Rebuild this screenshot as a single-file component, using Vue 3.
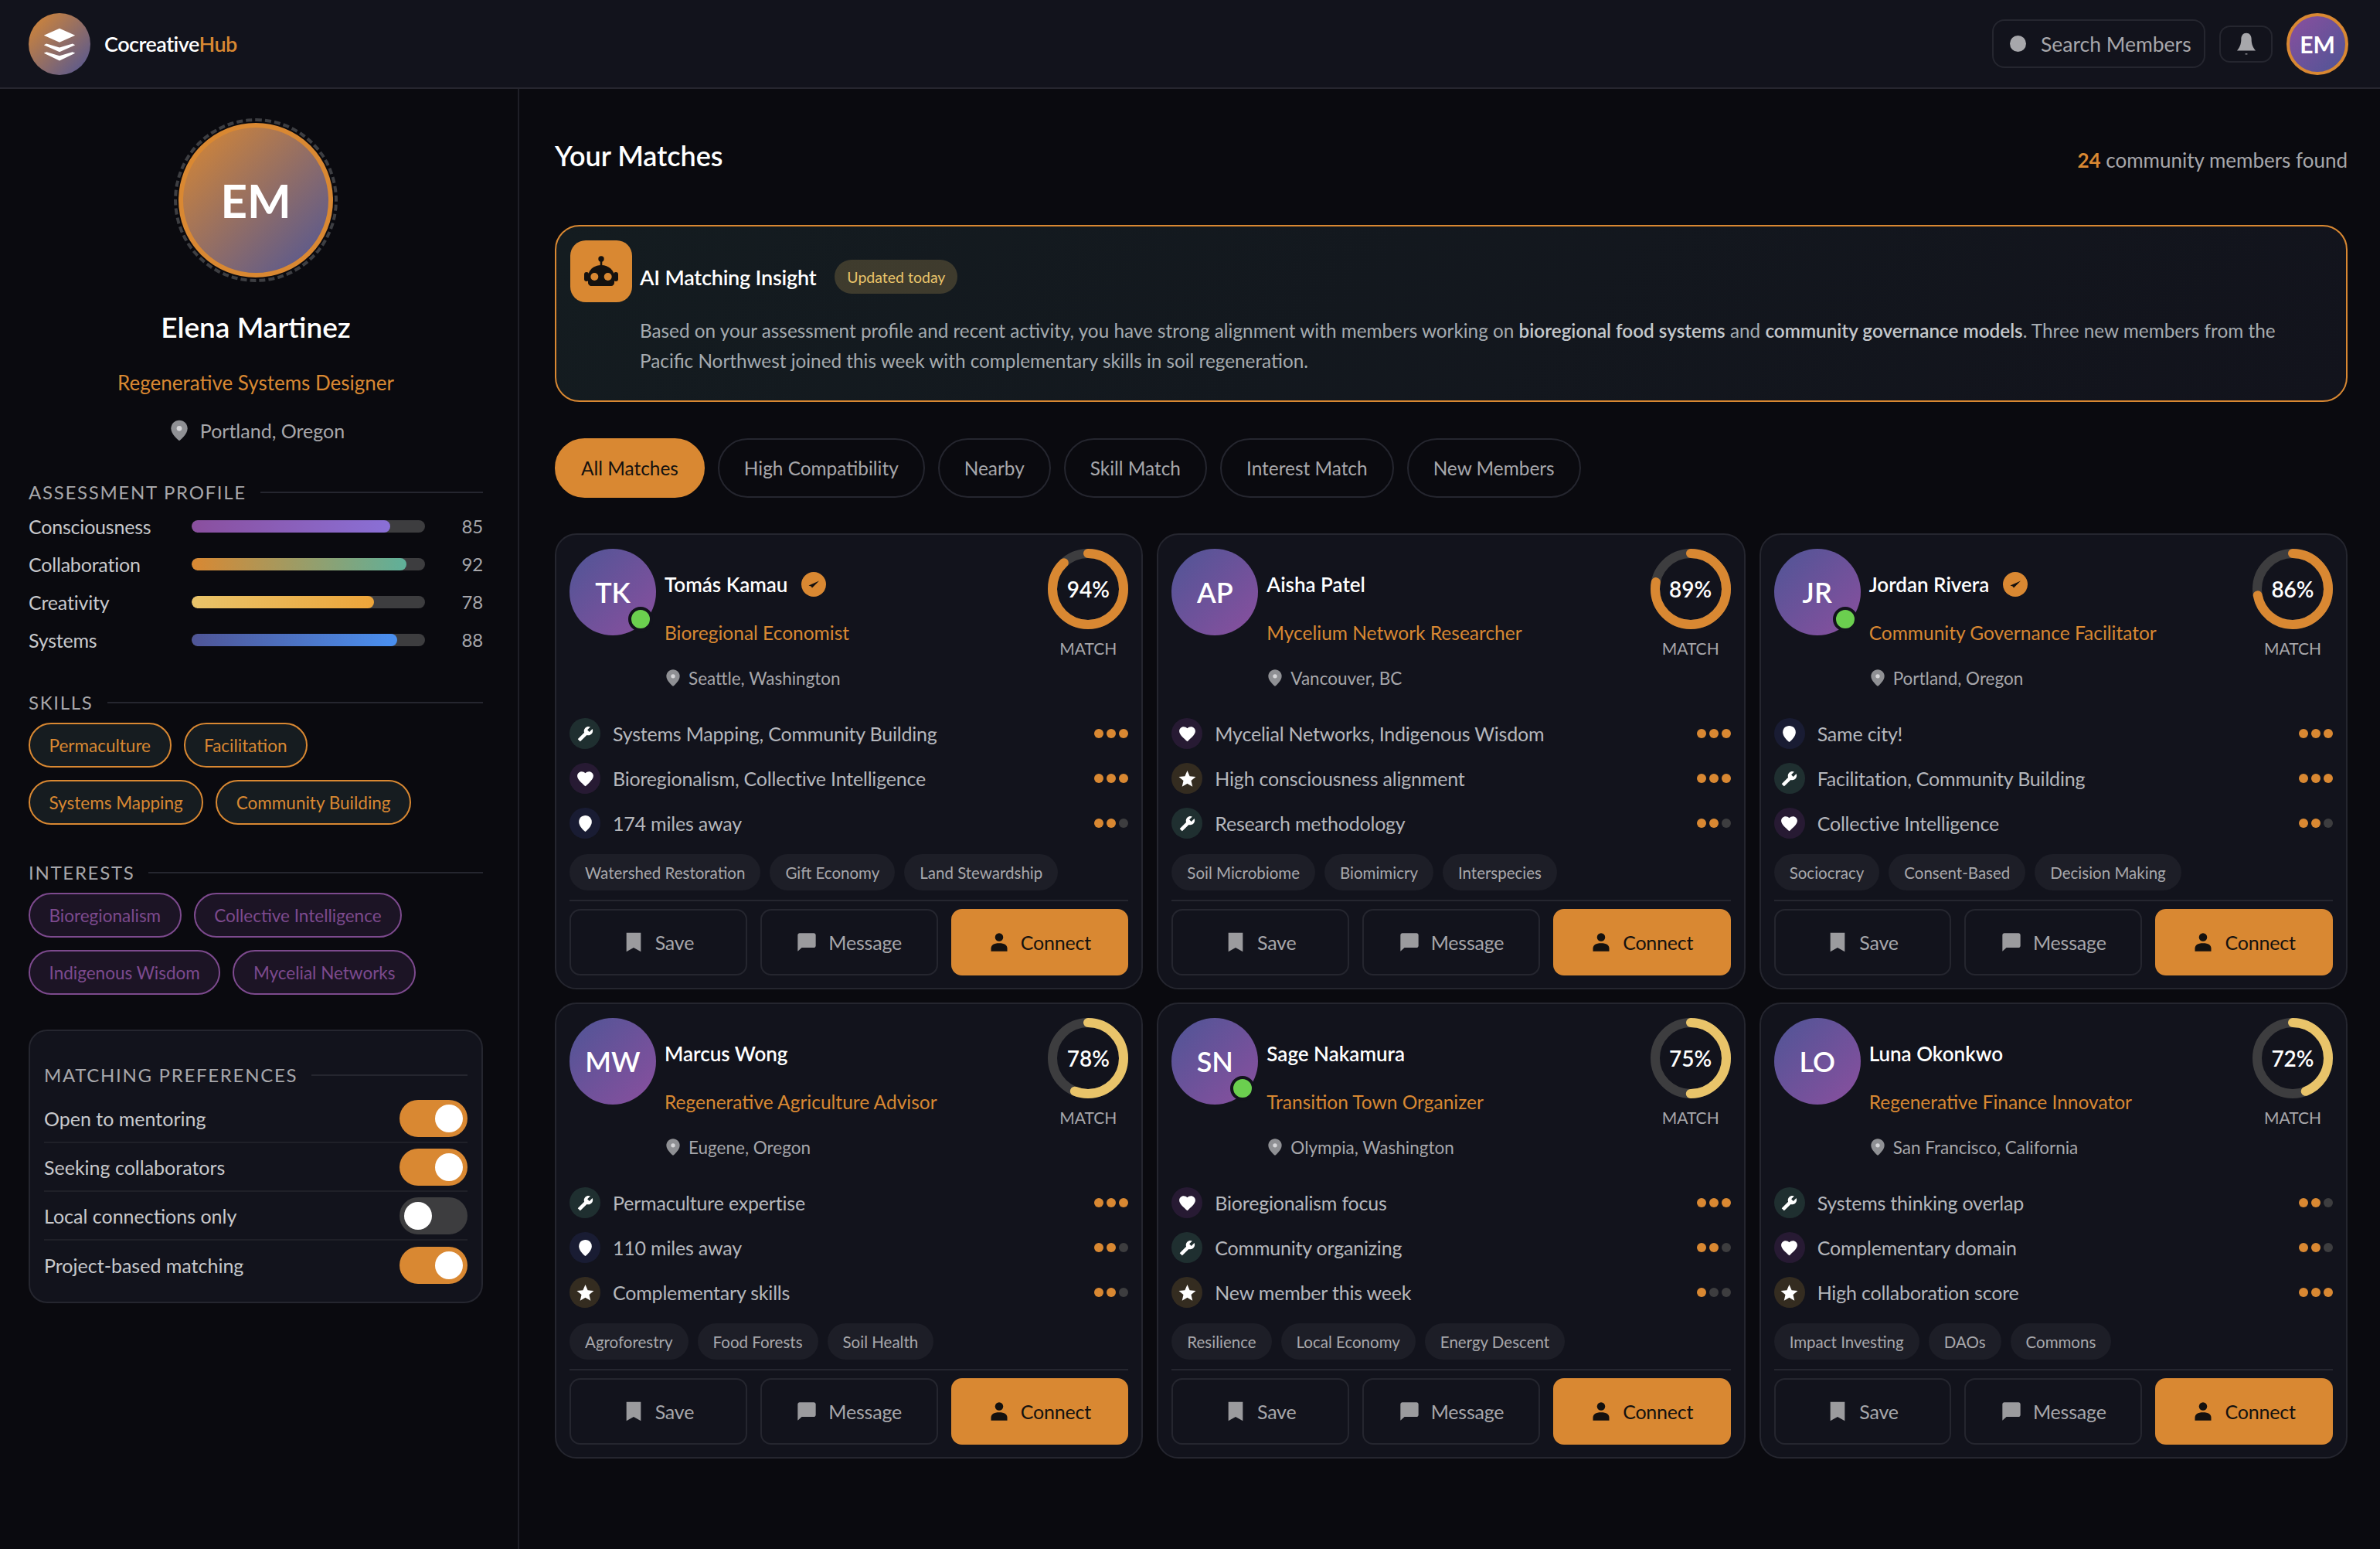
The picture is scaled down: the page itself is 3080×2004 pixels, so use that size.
<script setup>
import { ref } from 'vue';

const skills = ['Permaculture', 'Facilitation', 'Systems Mapping', 'Community Building'];
const interests = ['Bioregionalism', 'Collective Intelligence', 'Indigenous Wisdom', 'Mycelial Networks'];
const filters = ['All Matches', 'High Compatibility', 'Nearby', 'Skill Match', 'Interest Match', 'New Members'];
const activeFilter = ref('All Matches');

const assessment = [
  { label: 'Consciousness', value: 85, cls: 'fill-purple' },
  { label: 'Collaboration', value: 92, cls: 'fill-green' },
  { label: 'Creativity', value: 78, cls: 'fill-yellow' },
  { label: 'Systems', value: 88, cls: 'fill-blue' },
];

const prefs = ref([
  { label: 'Open to mentoring', on: true },
  { label: 'Seeking collaborators', on: true },
  { label: 'Local connections only', on: false },
  { label: 'Project-based matching', on: true },
]);

const members = [
  {
    initials: 'TK', name: 'Tomás Kamau', verified: true, online: true, role: 'Bioregional Economist', place: 'Seattle, Washington', score: 94,
    rows: [['wrench', 'Systems Mapping, Community Building', 3], ['heart', 'Bioregionalism, Collective Intelligence', 3], ['pin', '174 miles away', 2]],
    tags: ['Watershed Restoration', 'Gift Economy', 'Land Stewardship'],
  },
  {
    initials: 'AP', name: 'Aisha Patel', verified: false, online: false, role: 'Mycelium Network Researcher', place: 'Vancouver, BC', score: 89,
    rows: [['heart', 'Mycelial Networks, Indigenous Wisdom', 3], ['star', 'High consciousness alignment', 3], ['wrench', 'Research methodology', 2]],
    tags: ['Soil Microbiome', 'Biomimicry', 'Interspecies'],
  },
  {
    initials: 'JR', name: 'Jordan Rivera', verified: true, online: true, role: 'Community Governance Facilitator', place: 'Portland, Oregon', score: 86,
    rows: [['pin', 'Same city!', 3], ['wrench', 'Facilitation, Community Building', 3], ['heart', 'Collective Intelligence', 2]],
    tags: ['Sociocracy', 'Consent-Based', 'Decision Making'],
  },
  {
    initials: 'MW', name: 'Marcus Wong', verified: false, online: false, role: 'Regenerative Agriculture Advisor', place: 'Eugene, Oregon', score: 78,
    rows: [['wrench', 'Permaculture expertise', 3], ['pin', '110 miles away', 2], ['star', 'Complementary skills', 2]],
    tags: ['Agroforestry', 'Food Forests', 'Soil Health'],
  },
  {
    initials: 'SN', name: 'Sage Nakamura', verified: false, online: true, role: 'Transition Town Organizer', place: 'Olympia, Washington', score: 75,
    rows: [['heart', 'Bioregionalism focus', 3], ['wrench', 'Community organizing', 2], ['star', 'New member this week', 1]],
    tags: ['Resilience', 'Local Economy', 'Energy Descent'],
  },
  {
    initials: 'LO', name: 'Luna Okonkwo', verified: false, online: false, role: 'Regenerative Finance Innovator', place: 'San Francisco, California', score: 72,
    rows: [['wrench', 'Systems thinking overlap', 2], ['heart', 'Complementary domain', 2], ['star', 'High collaboration score', 3]],
    tags: ['Impact Investing', 'DAOs', 'Commons'],
  },
];

const RING_R = 46;
const ringLength = 2 * Math.PI * RING_R;
// the arc only starts filling from 50%, so 75% draws half a circle
const ringDash = (score) => `${((score - 50) / 50) * ringLength} ${ringLength}`;
const ringColor = (score) => (score >= 85 ? '#d98832' : '#e9c46a');

const icons = {
  wrench: 'M1.3 19l9.1-9.1C9.500 7.600 10 4.900 11.900 3c2-2 5-2.400 7.400-1.300L15 6l3 3 4.400-4.300c1.200 2.400.7 5.400-1.300 7.400-1.900 1.900-4.600 2.400-6.900 1.500l-9.100 9.100c-.4.400-1 .4-1.400 0l-2.300-2.300c-.5-.4-.5-1.100-.1-1.400z',
  heart: 'M12 21.400l-1.500-1.300C5.400 15.400 2 12.300 2 8.500 2 5.400 4.400 3 7.500 3c1.700 0 3.400.8 4.500 2.100C13.100 3.800 14.800 3 16.500 3 19.600 3 22 5.400 22 8.500c0 3.800-3.400 6.900-8.500 11.600L12 21.400z',
  pin: 'M12 2C7.600 2 4 5.400 4 10c0 5.400 6.600 11.200 8 12 1.400-.8 8-6.600 8-12 0-4.600-3.600-8-8-8z',
  star: 'M12 2l3 6.900 7.500.7-5.700 4.900 1.700 7.300-6.500-3.800-6.500 3.800 1.700-7.300L1.500 9.600 9 8.900z',
};
</script>

<template>
  <div class="app">
    <header class="topbar">
      <div class="brand">
        <div class="brand-logo">
          <svg viewBox="0 0 48 48" width="54" height="54">
            <path d="M24 6 42 14 24 22 6 14z" fill="#fff" />
            <path d="M9 23.500 24 28 39 23.500 42 25 24 33 6 25z" fill="#fff" />
            <path d="M9 33 24 37.500 39 33 42 34.500 24 43 6 34.500z" fill="#fff" />
          </svg>
        </div>
        <span class="brand-name">Cocreative<span class="accent">Hub</span></span>
      </div>
      <div class="top-actions">
        <div class="search">
          <span class="search-dot"></span>
          <span>Search Members</span>
        </div>
        <button class="bell">
          <svg viewBox="0 0 24 24" width="34" height="34"><path d="M12 2c-3 0-4.700 2.400-4.700 5.500 0 3-.5 6.500-3.800 10.500h17c-3.300-4-3.800-7.500-3.800-10.500C16.700 4.400 15 2 12 2z" fill="#a7a7ab" /><rect x="11" y="20.700" width="2" height="0.800" fill="#a7a7ab" /></svg>
        </button>
        <div class="top-avatar">EM</div>
      </div>
    </header>

    <div class="layout">
      <aside class="sidebar">
        <div class="profile">
          <div class="profile-avatar">EM</div>
          <h2 class="profile-name">Elena Martinez</h2>
          <p class="profile-role">Regenerative Systems Designer</p>
          <p class="profile-place">
            <svg viewBox="0 0 24 24" width="32" height="32"><path :d="icons.pin" fill="#8f9094" /><circle cx="12" cy="10" r="2.500" fill="#d5d5d8" /></svg>
            Portland, Oregon
          </p>
        </div>

        <section class="side-section first">
          <h3 class="section-title">Assessment Profile</h3>
          <div class="bar-row" v-for="item in assessment" :key="item.label">
            <span class="bar-label">{{ item.label }}</span>
            <span class="bar-track"><span class="bar-fill" :class="item.cls" :style="{ width: item.value + '%' }"></span></span>
            <span class="bar-value">{{ item.value }}</span>
          </div>
        </section>

        <section class="side-section skills">
          <h3 class="section-title">Skills</h3>
          <div class="tag-wrap">
            <span class="tag skill" v-for="s in skills" :key="s">{{ s }}</span>
          </div>
        </section>

        <section class="side-section">
          <h3 class="section-title">Interests</h3>
          <div class="tag-wrap">
            <span class="tag interest" v-for="s in interests" :key="s">{{ s }}</span>
          </div>
        </section>

        <section class="prefs">
          <h3 class="section-title">Matching Preferences</h3>
          <div class="pref-row" v-for="p in prefs" :key="p.label">
            <span>{{ p.label }}</span>
            <button class="toggle" :class="{ on: p.on }" @click="p.on = !p.on"><span class="knob"></span></button>
          </div>
        </section>
      </aside>

      <main class="main">
        <div class="main-head">
          <h1>Your Matches</h1>
          <p class="found"><strong>24</strong> community members found</p>
        </div>

        <section class="insight">
          <div class="insight-head">
            <div class="insight-icon">
              <svg viewBox="0 0 44 40" width="44" height="40">
                <circle cx="22" cy="4" r="3.700" fill="#14110f" />
                <rect x="20.700" y="6" width="2.600" height="7" fill="#14110f" />
                <path d="M22 12c-10 0-17 7-17 15v8c0 2 2 4 4 4h26c2 0 4-2 4-4v-8c0-8-7-15-17-15z" fill="#14110f" />
                <rect x="0" y="21" width="6" height="12" rx="3" fill="#14110f" />
                <rect x="38" y="21" width="6" height="12" rx="3" fill="#14110f" />
                <circle cx="13.300" cy="27" r="5" fill="#d98832" />
                <circle cx="30.700" cy="27" r="5" fill="#d98832" />
              </svg>
            </div>
            <h3>AI Matching Insight</h3>
            <span class="updated">Updated today</span>
          </div>
          <p class="insight-text">
            Based on your assessment profile and recent activity, you have strong alignment with members working on <strong>bioregional food systems</strong> and <strong>community governance models</strong>. Three new members from the Pacific Northwest joined this week with complementary skills in soil regeneration.
          </p>
        </section>

        <nav class="filters">
          <button
            v-for="f in filters"
            :key="f"
            class="filter"
            :class="{ active: f === activeFilter }"
            @click="activeFilter = f"
          >{{ f }}</button>
        </nav>

        <div class="grid">
          <article class="card" v-for="m in members" :key="m.name">
            <div class="card-top">
              <div class="avatar">
                {{ m.initials }}
                <span v-if="m.online" class="online"></span>
              </div>
              <div class="who">
                <div class="who-name">
                  {{ m.name }}
                  <span v-if="m.verified" class="verified">
                    <svg viewBox="0 0 32 32" width="32" height="32"><path d="M9.500 17.500 23 11.500 14 20.500 12.500 18.500z" fill="#14110f" /></svg>
                  </span>
                </div>
                <div class="who-role">{{ m.role }}</div>
                <div class="who-place">
                  <svg viewBox="0 0 24 24" width="26" height="26"><path :d="icons.pin" fill="#8f9094" /><circle cx="12" cy="10" r="2.500" fill="#d5d5d8" /></svg>
                  {{ m.place }}
                </div>
              </div>
              <div class="score">
                <div class="ring">
                  <svg viewBox="0 0 104 104" width="104" height="104">
                    <circle cx="52" cy="52" :r="RING_R" fill="none" stroke="#3d3d3f" stroke-width="12" />
                    <circle
                      cx="52" cy="52" :r="RING_R" fill="none" stroke-width="12" stroke-linecap="round"
                      :stroke="ringColor(m.score)" :stroke-dasharray="ringDash(m.score)" transform="rotate(-90 52 52)"
                    />
                  </svg>
                  <span class="ring-value">{{ m.score }}%</span>
                </div>
                <span class="ring-label">MATCH</span>
              </div>
            </div>

            <ul class="reasons">
              <li v-for="row in m.rows" :key="row[1]">
                <span class="reason-icon" :class="'ri-' + row[0]">
                  <svg viewBox="0 0 24 24" width="25" height="25"><path :d="icons[row[0]]" fill="#fff" /></svg>
                </span>
                <span class="reason-text">{{ row[1] }}</span>
                <span class="dots">
                  <i v-for="n in 3" :key="n" :class="{ lit: n <= row[2] }"></i>
                </span>
              </li>
            </ul>

            <div class="chips">
              <span class="chip" v-for="t in m.tags" :key="t">{{ t }}</span>
            </div>

            <div class="actions">
              <button class="action">
                <svg viewBox="0 0 24 24" width="28" height="28"><path d="M4 1.500h16v21l-8-4.500-8 4.500z" fill="#9b9b9e" /></svg>
                Save
              </button>
              <button class="action">
                <svg viewBox="0 0 24 24" width="28" height="28"><path d="M4 2h16c1 0 2 1 2 2v12c0 1-1 2-2 2H6.500L2 22V4c0-1 1-2 2-2z" fill="#9b9b9e" /></svg>
                Message
              </button>
              <button class="action primary">
                <svg viewBox="0 0 24 24" width="28" height="28"><circle cx="12" cy="6.500" r="4.500" fill="#14110f" /><path d="M3 22v-3c0-4 3-6 9-6s9 2 9 6v3z" fill="#14110f" /></svg>
                Connect
              </button>
            </div>
          </article>
        </div>
      </main>
    </div>
  </div>
</template>

<style>
html, body {
  background: #0a0a0f;
}
</style>

<style scoped>
.app {
  background: #0a0a0f;
  color: #fff;
  font-family: Lato, "Open Sans", sans-serif;
  min-height: 2004px;
}

button {
  font-family: inherit;
}

h1, h2, h3, p, ul {
  margin: 0;
  padding: 0;
}

.accent {
  color: #d98832;
}

/* top bar */
.topbar {
  align-items: center;
  background: #12131c;
  border-bottom: 2px solid #26262f;
  box-sizing: border-box;
  display: flex;
  height: 115px;
  justify-content: space-between;
  padding: 0 41px 0 37px;
}

.brand {
  align-items: center;
  display: flex;
  gap: 18px;
}

.brand-logo {
  align-items: center;
  background: linear-gradient(135deg, #d98832, #4f5596);
  border-radius: 50%;
  display: flex;
  height: 80px;
  justify-content: center;
  width: 80px;
}

.brand-name {
  font-size: 27px;
  font-weight: 600;
  letter-spacing: -0.5px;
}

.top-actions {
  align-items: center;
  display: flex;
  gap: 18px;
}

.search {
  align-items: center;
  border: 2px solid #25262f;
  border-radius: 16px;
  box-sizing: border-box;
  color: #a7a7ab;
  display: flex;
  font-size: 26.5px;
  gap: 19px;
  height: 63px;
  padding: 0 0 0 21px;
  white-space: nowrap;
  width: 276px;
}

.search-dot {
  background: #a7a7ab;
  border-radius: 50%;
  height: 21px;
  width: 21px;
}

.bell {
  align-items: center;
  background: none;
  border: 2px solid #25262f;
  border-radius: 14px;
  display: flex;
  height: 48px;
  justify-content: center;
  padding: 0;
  width: 69px;
}

.top-avatar {
  align-items: center;
  background: linear-gradient(135deg, #8a4f9e, #4f5596);
  border: 4px solid #d98832;
  border-radius: 50%;
  box-sizing: border-box;
  display: flex;
  font-size: 30px;
  font-weight: 700;
  height: 80px;
  justify-content: center;
  width: 80px;
}

.layout {
  display: flex;
}

/* sidebar */
.sidebar {
  border-right: 2px solid #1f1f27;
  box-sizing: border-box;
  flex: 0 0 672px;
  min-height: 1889px;
  padding: 38px 45px 0 37px;
}

.profile {
  align-items: center;
  display: flex;
  flex-direction: column;
}

.profile-avatar {
  align-items: center;
  background: linear-gradient(135deg, #d98832, #4f5596);
  border: 6px solid #d98832;
  border-radius: 50%;
  box-sizing: border-box;
  display: flex;
  font-size: 60px;
  font-weight: 700;
  height: 200px;
  justify-content: center;
  margin-top: 6px;
  position: relative;
  width: 200px;
}

.profile-avatar::before {
  border: 4px dashed #3d3e42;
  border-radius: 50%;
  content: '';
  inset: -12px;
  position: absolute;
}

.profile-name {
  font-size: 37px;
  font-weight: 600;
  margin-top: 41px;
}

.profile-role {
  color: #d98832;
  font-size: 26px;
  margin-top: 34px;
}

.profile-place {
  align-items: center;
  color: #a7a7ab;
  display: flex;
  font-size: 25px;
  gap: 11px;
  height: 30px;
  margin-top: 31px;
}

.side-section {
  margin-top: 47px;
}

.side-section.first {
  margin-top: 50px;
}

.side-section.skills {
  margin-top: 42px;
}

.section-title {
  align-items: center;
  color: #a7a7ab;
  display: flex;
  font-size: 24px;
  font-weight: 400;
  gap: 18px;
  letter-spacing: 1.7px;
  line-height: 30px;
  text-transform: uppercase;
}

.section-title::after {
  background: #25262f;
  content: '';
  flex: 1;
  height: 2px;
}

.first .section-title {
  margin-bottom: 4px;
}

.bar-row {
  align-items: center;
  color: #c8c9cc;
  display: flex;
  font-size: 25px;
  height: 49px;
  letter-spacing: -0.2px;
}

.bar-label {
  flex: 0 0 211px;
}

.bar-track {
  background: #3d3d3f;
  border-radius: 8px;
  display: block;
  height: 16px;
  overflow: hidden;
  width: 302px;
}

.bar-fill {
  border-radius: 8px;
  display: block;
  height: 100%;
}

.fill-purple { background: linear-gradient(90deg, #8a4f9e, #8a70d6); }
.fill-green { background: linear-gradient(90deg, #d98832, #5fb09a); }
.fill-yellow { background: linear-gradient(90deg, #e9c46a, #eda53a); }
.fill-blue { background: linear-gradient(90deg, #4f5596, #4a90f0); }

.bar-value {
  color: #a7a7ab;
  flex: 1;
  font-size: 24px;
  text-align: right;
}

.tag-wrap {
  display: flex;
  flex-wrap: wrap;
  gap: 16px;
  margin-top: 11px;
}

.tag {
  align-items: center;
  border-radius: 30px;
  box-sizing: border-box;
  display: flex;
  font-size: 22.5px;
  height: 58px;
  padding: 0 24.5px;
}

.tag.skill {
  background: #161c20;
  border: 2px solid #d98832;
  color: #d98832;
}

.tag.interest {
  background: #1c1425;
  border: 2px solid #7d4a8e;
  color: #7d4a8e;
}

.prefs {
  background: #12131c;
  border: 2px solid #25262f;
  border-radius: 24px;
  box-sizing: border-box;
  margin-top: 45px;
  padding: 42px 18px 16px;
}

.prefs .section-title {
  margin-bottom: 10px;
}

.pref-row {
  align-items: center;
  border-bottom: 2px solid #1f2028;
  box-sizing: border-box;
  color: #c8c9cc;
  display: flex;
  font-size: 25px;
  height: 63px;
  justify-content: space-between;
}

.pref-row:last-child {
  border-bottom: none;
}

.toggle {
  background: #3d3d3f;
  border: none;
  border-radius: 24px;
  height: 48px;
  padding: 0;
  position: relative;
  width: 88px;
}

.toggle.on {
  background: #d98832;
}

.knob {
  background: #fff;
  border-radius: 50%;
  height: 36px;
  left: 6px;
  position: absolute;
  top: 6px;
  width: 36px;
}

.toggle.on .knob {
  left: 46px;
}

/* main column */
.main {
  box-sizing: border-box;
  flex: 1;
  min-width: 0;
  padding: 64px 42px 0 46px;
}

.main-head {
  align-items: center;
  display: flex;
  justify-content: space-between;
}

.main-head h1 {
  font-size: 36px;
  font-weight: 600;
}

.found {
  color: #a7a7ab;
  font-size: 26px;
  margin-top: 12px;
}

.found strong {
  color: #d98832;
  font-weight: 700;
}

.insight {
  background: linear-gradient(135deg, #141c20, #12131c);
  border: 2px solid #d98832;
  border-radius: 32px;
  box-sizing: border-box;
  height: 229px;
  margin-top: 68px;
  padding: 18px;
}

.insight-head {
  align-items: center;
  display: flex;
  gap: 10px;
}

.insight-icon {
  align-items: center;
  background: #d98832;
  border-radius: 20px;
  display: flex;
  height: 80px;
  justify-content: center;
  width: 80px;
}

.insight-head h3 {
  font-size: 27px;
  font-weight: 600;
  letter-spacing: -0.2px;
  margin-right: 14px;
  padding-top: 14px;
}

.updated {
  align-items: center;
  background: rgba(233, 196, 106, 0.2);
  border-radius: 22px;
  color: #e9c46a;
  display: flex;
  font-size: 19.5px;
  height: 44px;
  margin-top: 14px;
  padding: 0 16px;
}

.insight-text {
  color: #a5abb0;
  font-size: 24.3px;
  line-height: 39px;
  margin: 17px 60px 0 90px;
}

.insight-text strong {
  color: #c4c8cc;
  font-weight: 600;
}

.filters {
  display: flex;
  gap: 17px;
  margin-top: 47px;
}

.filter {
  background: none;
  border: 2px solid #25262f;
  border-radius: 39px;
  color: #a7a7ab;
  font-size: 24.4px;
  height: 77px;
  padding: 0 32px;
}

.filter.active {
  background: #d98832;
  border-color: #d98832;
  color: #14110f;
}

.grid {
  display: grid;
  gap: 17px 18px;
  grid-template-columns: repeat(3, 1fr);
  margin-top: 46px;
}

.card {
  background: #12131c;
  border: 2px solid #25262f;
  border-radius: 28px;
  box-sizing: border-box;
  height: 590px;
  padding: 18px 17px;
}

.card-top {
  display: flex;
  height: 200px;
}

.avatar {
  align-items: center;
  background: linear-gradient(135deg, #4f5596, #8a4f9e);
  border-radius: 50%;
  display: flex;
  flex: 0 0 112px;
  font-size: 36px;
  font-weight: 600;
  height: 112px;
  justify-content: center;
  position: relative;
}

.online {
  background: #6bcf4f;
  border: 4px solid #12131c;
  border-radius: 50%;
  box-sizing: content-box;
  height: 24px;
  position: absolute;
  right: 4px;
  top: 75px;
  width: 24px;
}

.who {
  flex: 1;
  margin-left: 11px;
}

.who-name {
  align-items: center;
  display: flex;
  font-size: 26px;
  font-weight: 600;
  gap: 18px;
  height: 32px;
  margin-top: 30px;
}

.verified {
  background: #d98832;
  border-radius: 50%;
  height: 32px;
  width: 32px;
}

.who-role {
  color: #d98832;
  font-size: 24.5px;
  line-height: 32px;
  margin-top: 31px;
}

.who-place {
  align-items: center;
  color: #a7a7ab;
  display: flex;
  font-size: 22.5px;
  gap: 7px;
  height: 32px;
  margin-left: -2px;
  margin-top: 26px;
}

.score {
  align-items: center;
  display: flex;
  flex-direction: column;
  gap: 12px;
}

.ring {
  height: 104px;
  position: relative;
  width: 104px;
}

.ring-value {
  font-size: 28px;
  font-weight: 600;
  left: 0;
  line-height: 104px;
  position: absolute;
  text-align: center;
  top: 0;
  width: 104px;
}

.ring-label {
  color: #a7a7ab;
  font-size: 21px;
}

.reasons {
  display: flex;
  flex-direction: column;
  gap: 18px;
  list-style: none;
  margin-top: 19px;
}

.reasons li {
  align-items: center;
  display: flex;
  height: 40px;
}

.reason-icon {
  align-items: center;
  border-radius: 50%;
  display: flex;
  flex: 0 0 40px;
  height: 40px;
  justify-content: center;
}

.ri-wrench { background: #1f2f30; }
.ri-heart { background: #271a33; }
.ri-pin { background: #191c33; }
.ri-star { background: #342c20; }

.ri-wrench svg {
  height: 21px;
  width: 21px;
}

.reason-text {
  color: #b5b7bc;
  flex: 1;
  font-size: 25px;
  letter-spacing: -0.2px;
  margin-left: 16px;
}

.dots {
  display: flex;
  gap: 4px;
}

.dots i {
  background: #3d3d3f;
  border-radius: 50%;
  height: 12px;
  width: 12px;
}

.dots i.lit {
  background: #d98832;
}

.chips {
  display: flex;
  gap: 12px;
  margin-top: 20px;
}

.chip {
  align-items: center;
  background: #1d1e27;
  border-radius: 24px;
  color: #a7a7ab;
  display: flex;
  font-size: 20.5px;
  height: 47px;
  padding: 0 20px;
}

.actions {
  border-top: 2px solid #25262f;
  display: grid;
  gap: 17px;
  grid-template-columns: repeat(3, 1fr);
  margin-top: 12px;
  padding-top: 10px;
}

.action {
  align-items: center;
  background: none;
  border: 2px solid #25262f;
  border-radius: 14px;
  color: #a7a7ab;
  display: flex;
  font-size: 25px;
  gap: 14px;
  height: 86px;
  justify-content: center;
  letter-spacing: -0.2px;
  padding: 0;
}

.action.primary {
  background: #d98832;
  border-color: #d98832;
  color: #14110f;
}
</style>
